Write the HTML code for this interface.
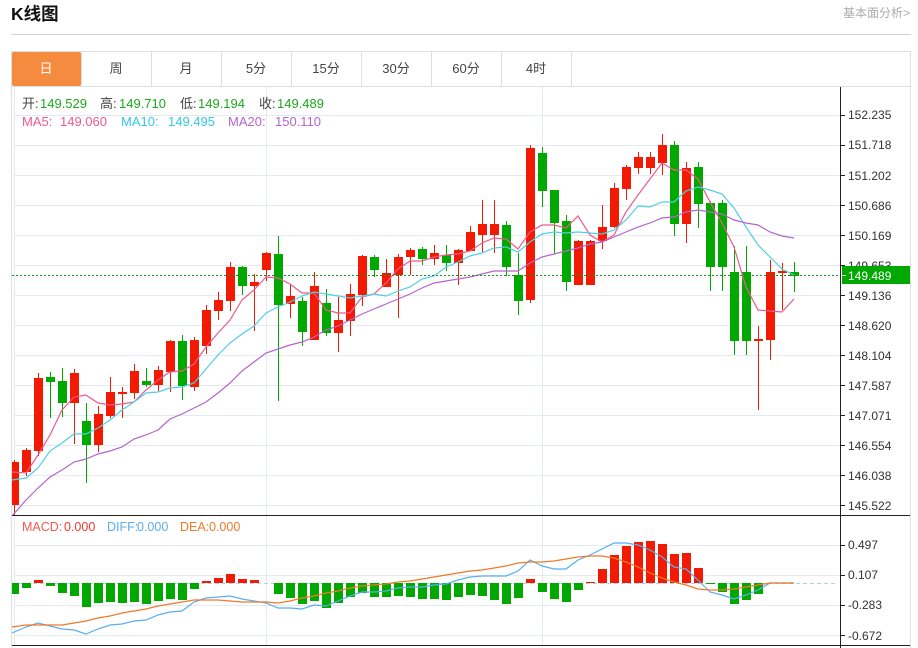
<!DOCTYPE html>
<html lang="zh"><head><meta charset="utf-8"><title>K线图</title>
<style>
html,body{margin:0;padding:0;background:#fff;width:918px;height:648px;overflow:hidden}
svg{display:block}
text{font-family:"Liberation Sans","Noto Sans CJK SC",sans-serif;font-size:12px}
</style></head><body>
<svg width="918" height="648" viewBox="0 0 918 648" xmlns="http://www.w3.org/2000/svg">
<defs><clipPath id="m"><rect x="12" y="87" width="828" height="428"/></clipPath></defs>
<text x="11" y="20" style="font-size:17.5px;font-weight:bold" fill="#111">K线图</text>
<text x="910" y="17" text-anchor="end" fill="#aaa">基本面分析&gt;</text>
<path d="M11 34.5H911" stroke="#d2d2d2" fill="none"/>
<!-- frame -->
<path d="M11.5 51V648M11 51.5H911M910.5 51V648M11 86.5H911" stroke="#dcdfe3" fill="none"/>
<path d="M81.5 51V86M151.5 51V86M221.5 51V86M291.5 51V86M361.5 51V86M431.5 51V86M501.5 51V86M571.5 51V86" stroke="#dcdfe3" fill="none"/>
<rect x="12" y="52" width="69" height="34" rx="2" fill="#f58b3e"/>
<g style="text-anchor:middle" fill="#444" text-anchor="middle">
<text x="46" y="73" style="font-size:13px" fill="#fff">日</text>
<text x="116" y="73" style="font-size:13px">周</text>
<text x="186" y="73" style="font-size:13px">月</text>
<text x="256" y="73" style="font-size:13px">5分</text>
<text x="326" y="73" style="font-size:13px">15分</text>
<text x="396" y="73" style="font-size:13px">30分</text>
<text x="466" y="73" style="font-size:13px">60分</text>
<text x="536" y="73" style="font-size:13px">4时</text>
</g>
<!-- grid -->
<path d="M14.5 87V645M266.5 87V645M542.5 87V645M14 115.5H840M14 145.5H840M14 175.5H840M14 205.5H840M14 235.5H840M14 265.5H840M14 295.5H840M14 325.5H840M14 355.5H840M14 385.5H840M14 415.5H840M14 445.5H840M14 475.5H840M14 505.5H840M14 545.5H840M14 575.5H840M14 605.5H840M14 635.5H840" stroke="#e3eaf1" fill="none"/>
<g clip-path="url(#m)">
<!-- red wicks -->
<path stroke="#f21a02" fill="none" d="M14.5 460V515M26.5 448V476M38.5 373V456M74.5 369V444M98.5 406V452M110.5 377V418M122.5 387V418M134.5 364V399M158.5 366V391M170.5 340V392M194.5 337V391M206.5 305V354M218.5 292V320M230.5 262V311M254.5 274V331M266.5 252V281M290.5 284V318M314.5 272V340M338.5 297V352M350.5 284V336M362.5 255V306M386.5 259V287M398.5 254V318M410.5 248V275M434.5 245V265M458.5 249V285M470.5 226V251M482.5 200V252M494.5 200V253M530.5 145V303M578.5 240V285M590.5 240V285M602.5 205V249M614.5 183V228M626.5 165V200M638.5 152V174M650.5 152V174M662.5 134V175M686.5 162V243M758.5 326V410M770.5 260V360M782.5 263V310"/>
<!-- red bodies -->
<path fill="#f21a02" d="M10 462h9v43h-9zM22 450h9v22h-9zM34 378h9v73h-9zM70 373h9v30h-9zM94 414h9v31h-9zM106 392h9v24h-9zM118 392h9v2h-9zM130 371h9v22h-9zM154 370h9v15h-9zM166 341h9v31h-9zM190 340h9v47h-9zM202 310h9v36h-9zM214 300h9v11h-9zM226 267h9v34h-9zM250 282h9v4h-9zM262 253h9v17h-9zM286 296h9v8h-9zM310 286h9v54h-9zM334 320h9v13h-9zM346 294h9v27h-9zM358 256h9v39h-9zM382 273h9v14h-9zM394 257h9v18h-9zM406 250h9v7h-9zM430 253h9v6h-9zM454 250h9v13h-9zM466 232h9v19h-9zM478 224h9v11h-9zM490 224h9v11h-9zM526 148h9v152h-9zM574 241h9v44h-9zM586 241h9v44h-9zM598 227h9v14h-9zM610 188h9v39h-9zM622 167h9v22h-9zM634 157h9v11h-9zM646 157h9v11h-9zM658 145h9v18h-9zM682 168h9v56h-9zM754 339h9v2h-9zM766 272h9v68h-9zM778 271h9v2h-9z"/>
<!-- green wicks -->
<path stroke="#00a800" fill="none" d="M50.5 372V418M62.5 368V417M86.5 403V483M146.5 368V387M182.5 335V400M242.5 266V295M278.5 236V401M302.5 297V346M326.5 289V336M374.5 255V277M422.5 247V265M446.5 245V271M506.5 221V276M518.5 253V315M542.5 147V207M554.5 190V254M566.5 215V291M674.5 141V236M698.5 162V228M710.5 201V291M722.5 200V291M734.5 246V355M746.5 246V355M794.5 262V292"/>
<!-- green bodies -->
<path fill="#00a800" d="M46 377h9v5h-9zM58 381h9v22h-9zM82 421h9v24h-9zM142 381h9v4h-9zM178 341h9v45h-9zM238 267h9v19h-9zM274 254h9v51h-9zM298 301h9v31h-9zM322 303h9v30h-9zM370 257h9v13h-9zM418 249h9v10h-9zM442 255h9v8h-9zM502 225h9v42h-9zM514 275h9v26h-9zM538 153h9v38h-9zM550 190h9v33h-9zM562 221h9v61h-9zM670 145h9v79h-9zM694 167h9v37h-9zM706 203h9v64h-9zM718 203h9v64h-9zM730 272h9v69h-9zM742 272h9v69h-9zM790 272h9v4h-9z"/>
<!-- MA5 -->
<polyline fill="none" stroke="#ef5a8c" stroke-width="1.2" points="12,472 26,473 38,455 50,435 62,410 74,397 86,395 98,403 110,405 122,404 134,402 146,390 158,380 170,372 182,371 194,364 206,347 218,333 230,320 242,300 254,290 266,277 278,278 290,284 302,293 314,293 326,310 338,313 350,313 362,297 374,294 386,283 398,269 410,261 422,261 434,257 446,255 458,254 470,251 482,243 494,238 506,239 518,249 530,232 542,225 554,225 566,228 578,216 590,235 602,242 614,235 626,212 638,195 650,179 662,163 674,170 686,170 698,179 710,202 722,223 734,247 746,287 758,310 770,311 782,312 794,299"/>
<!-- MA10 -->
<polyline fill="none" stroke="#4fd0e5" stroke-width="1.2" points="12,480 26,478 38,468 50,451 62,443 74,434 86,434 98,428 110,420 122,410 134,402 146,393 158,392 170,388 182,387 194,383 206,369 218,355 230,343 242,334 254,326 266,313 278,307 290,302 302,296 314,292 326,294 338,296 350,298 362,296 374,294 386,296 398,291 410,287 422,279 434,276 446,267 458,262 470,256 482,253 494,248 506,247 518,252 530,242 542,234 554,232 566,233 578,232 590,233 602,234 614,230 626,220 638,206 650,207 662,202 674,202 686,191 698,187 710,190 722,194 734,208 746,227 758,245 770,257 782,269 794,275"/>
<!-- MA20 -->
<polyline fill="none" stroke="#b565cc" stroke-width="1.2" points="12,516 26,500 38,488 50,477 62,470 74,462 86,459 98,454 110,451 122,447 134,439 146,435 158,430 170,419 182,414 194,408 206,402 218,393 230,383 242,371 254,362 266,353 278,349 290,345 302,342 314,337 326,330 338,326 350,320 362,314 374,309 386,304 398,299 410,294 422,288 434,283 446,281 458,279 470,277 482,274 494,271 506,271 518,271 530,263 542,257 554,254 566,251 578,248 590,244 602,242 614,237 626,232 638,227 650,223 662,218 674,217 686,212 698,210 710,212 722,214 734,220 746,223 758,225 770,232 782,236 794,238"/>
</g>
<!-- MACD zero -->
<path d="M12 583.5H836" stroke="#a9d4ea" stroke-dasharray="4 3" fill="none"/>
<!-- MACD green bars -->
<path fill="#00a800" d="M12 583h7v11h-7zM22 583h9v5h-9zM46 583h9v3h-9zM58 583h9v10h-9zM70 583h9v13h-9zM82 583h9v24h-9zM94 583h9v20h-9zM106 583h9v19h-9zM118 583h9v20h-9zM130 583h9v19h-9zM142 583h9v21h-9zM154 583h9v18h-9zM166 583h9v16h-9zM178 583h9v17h-9zM190 583h9v6h-9zM274 583h9v11h-9zM286 583h9v15h-9zM298 583h9v21h-9zM310 583h9v18h-9zM322 583h9v25h-9zM334 583h9v20h-9zM346 583h9v14h-9zM358 583h9v10h-9zM370 583h9v14h-9zM382 583h9v14h-9zM394 583h9v13h-9zM406 583h9v14h-9zM418 583h9v16h-9zM430 583h9v16h-9zM442 583h9v17h-9zM454 583h9v14h-9zM466 583h9v12h-9zM478 583h9v13h-9zM490 583h9v17h-9zM502 583h9v21h-9zM514 583h9v15h-9zM538 583h9v9h-9zM550 583h9v16h-9zM562 583h9v19h-9zM574 583h9v7h-9zM706 583h9v1h-9zM718 583h9v9h-9zM730 583h9v21h-9zM742 583h9v17h-9zM754 583h9v11h-9z"/>
<!-- MACD red bars -->
<path fill="#f21a02" d="M34 580h9v3h-9zM202 581h9v2h-9zM214 578h9v5h-9zM226 574h9v9h-9zM238 579h9v4h-9zM250 580h9v3h-9zM526 579h9v4h-9zM586 582h9v1h-9zM598 569h9v14h-9zM610 555h9v28h-9zM622 546h9v37h-9zM634 542h9v41h-9zM646 541h9v42h-9zM658 544h9v39h-9zM670 554h9v29h-9zM682 553h9v30h-9zM694 568h9v15h-9z"/>
<!-- DIFF -->
<polyline fill="none" stroke="#5aaef0" stroke-width="1.2" points="12,633 26,627 38,623 50,626 62,629 74,630 86,634 98,629 110,625 122,624 134,621 146,620 158,615 170,612 182,611 194,602 206,598 218,597 230,596 242,599 254,601 266,603 278,608 290,608 302,609 314,605 326,606 338,601 350,596 362,592 374,592 386,591 398,588 410,587 422,587 434,585 446,584 458,580 470,577 482,576 494,576 506,576 518,571 530,560 542,566 554,569 566,569 578,560 590,555 602,549 614,543 626,543 638,545 650,550 662,557 674,567 686,569 698,580 710,592 722,595 734,599 746,595 758,590 770,583 782,583 794,583"/>
<!-- DEA -->
<polyline fill="none" stroke="#f07a28" stroke-width="1.2" points="12,627 26,625 38,625 50,625 62,625 74,623 86,621 98,618 110,616 122,613 134,611 146,609 158,606 170,604 182,602 194,600 206,600 218,600 230,601 242,602 254,602 266,602 278,603 290,601 302,598 314,596 326,593 338,591 350,588 362,586 374,585 386,584 398,582 410,581 422,579 434,577 446,575 458,573 470,571 482,570 494,568 506,566 518,563 530,562 542,562 554,561 566,559 578,557 590,556 602,556 614,558 626,562 638,567 650,573 662,578 674,582 686,585 698,589 710,590 722,590 734,589 746,587 758,585 770,583 782,583 794,583"/>
<!-- axes -->
<path d="M12 515.5H910M12 645.5H910M840.5 87V648" stroke="#222" fill="none"/>
<path d="M840 115.5h5M840 145.5h5M840 175.5h5M840 205.5h5M840 235.5h5M840 265.5h5M840 295.5h5M840 325.5h5M840 355.5h5M840 385.5h5M840 415.5h5M840 445.5h5M840 475.5h5M840 505.5h5M840 545.5h5M840 575.5h5M840 605.5h5M840 635.5h5" stroke="#222" fill="none"/>
<g fill="#333">
<text x="848" y="119">152.235</text>
<text x="848" y="149">151.718</text>
<text x="848" y="180">151.202</text>
<text x="848" y="210">150.686</text>
<text x="848" y="240">150.169</text>
<text x="848" y="270">149.653</text>
<text x="848" y="300">149.136</text>
<text x="848" y="330">148.620</text>
<text x="848" y="360">148.104</text>
<text x="848" y="390">147.587</text>
<text x="848" y="420">147.071</text>
<text x="848" y="450">146.554</text>
<text x="848" y="480">146.038</text>
<text x="848" y="510">145.522</text>
<text x="848" y="549">0.497</text>
<text x="848" y="579">0.107</text>
<text x="848" y="609">-0.283</text>
<text x="848" y="640">-0.672</text>
</g>
<!-- last price -->
<path d="M12 275.5H840" stroke="#1a8f1a" stroke-dasharray="2 2" fill="none"/>
<rect x="842" y="266" width="68" height="18" fill="#00a800"/>
<path d="M842 275.5h4" stroke="#cfe9cf" fill="none"/>
<text x="848" y="280" fill="#fff">149.489</text>
<!-- legend -->
<g style="font-size:13px">
<text x="22" y="108" fill="#444" style="font-size:13px">开:</text><text x="40" y="108" fill="#1ca81c" style="font-size:13px">149.529</text>
<text x="100" y="108" fill="#444" style="font-size:13px">高:</text><text x="119" y="108" fill="#1ca81c" style="font-size:13px">149.710</text>
<text x="180" y="108" fill="#444" style="font-size:13px">低:</text><text x="198" y="108" fill="#1ca81c" style="font-size:13px">149.194</text>
<text x="259" y="108" fill="#444" style="font-size:13px">收:</text><text x="277" y="108" fill="#1ca81c" style="font-size:13px">149.489</text>
<text x="22" y="126" fill="#ef5a8c" style="font-size:13px">MA5:</text><text x="60" y="126" fill="#ef5a8c" style="font-size:13px">149.060</text>
<text x="121" y="126" fill="#35c8e8" style="font-size:13px">MA10:</text><text x="168" y="126" fill="#35c8e8" style="font-size:13px">149.495</text>
<text x="228" y="126" fill="#b565cc" style="font-size:13px">MA20:</text><text x="275" y="126" fill="#b565cc" style="font-size:13px">150.110</text>
<text x="22" y="531" fill="#ef5a50" style="font-size:12.5px">MACD:</text><text x="64" y="531" fill="#ef3a30" style="font-size:12.5px">0.000</text>
<text x="107" y="531" fill="#5aaef0" style="font-size:12.5px">DIFF:</text><text x="137" y="531" fill="#5aaef0" style="font-size:12.5px">0.000</text>
<text x="180" y="531" fill="#f07a28" style="font-size:12.5px">DEA:</text><text x="209" y="531" fill="#f07a28" style="font-size:12.5px">0.000</text>
</g>
</svg>
</body></html>
